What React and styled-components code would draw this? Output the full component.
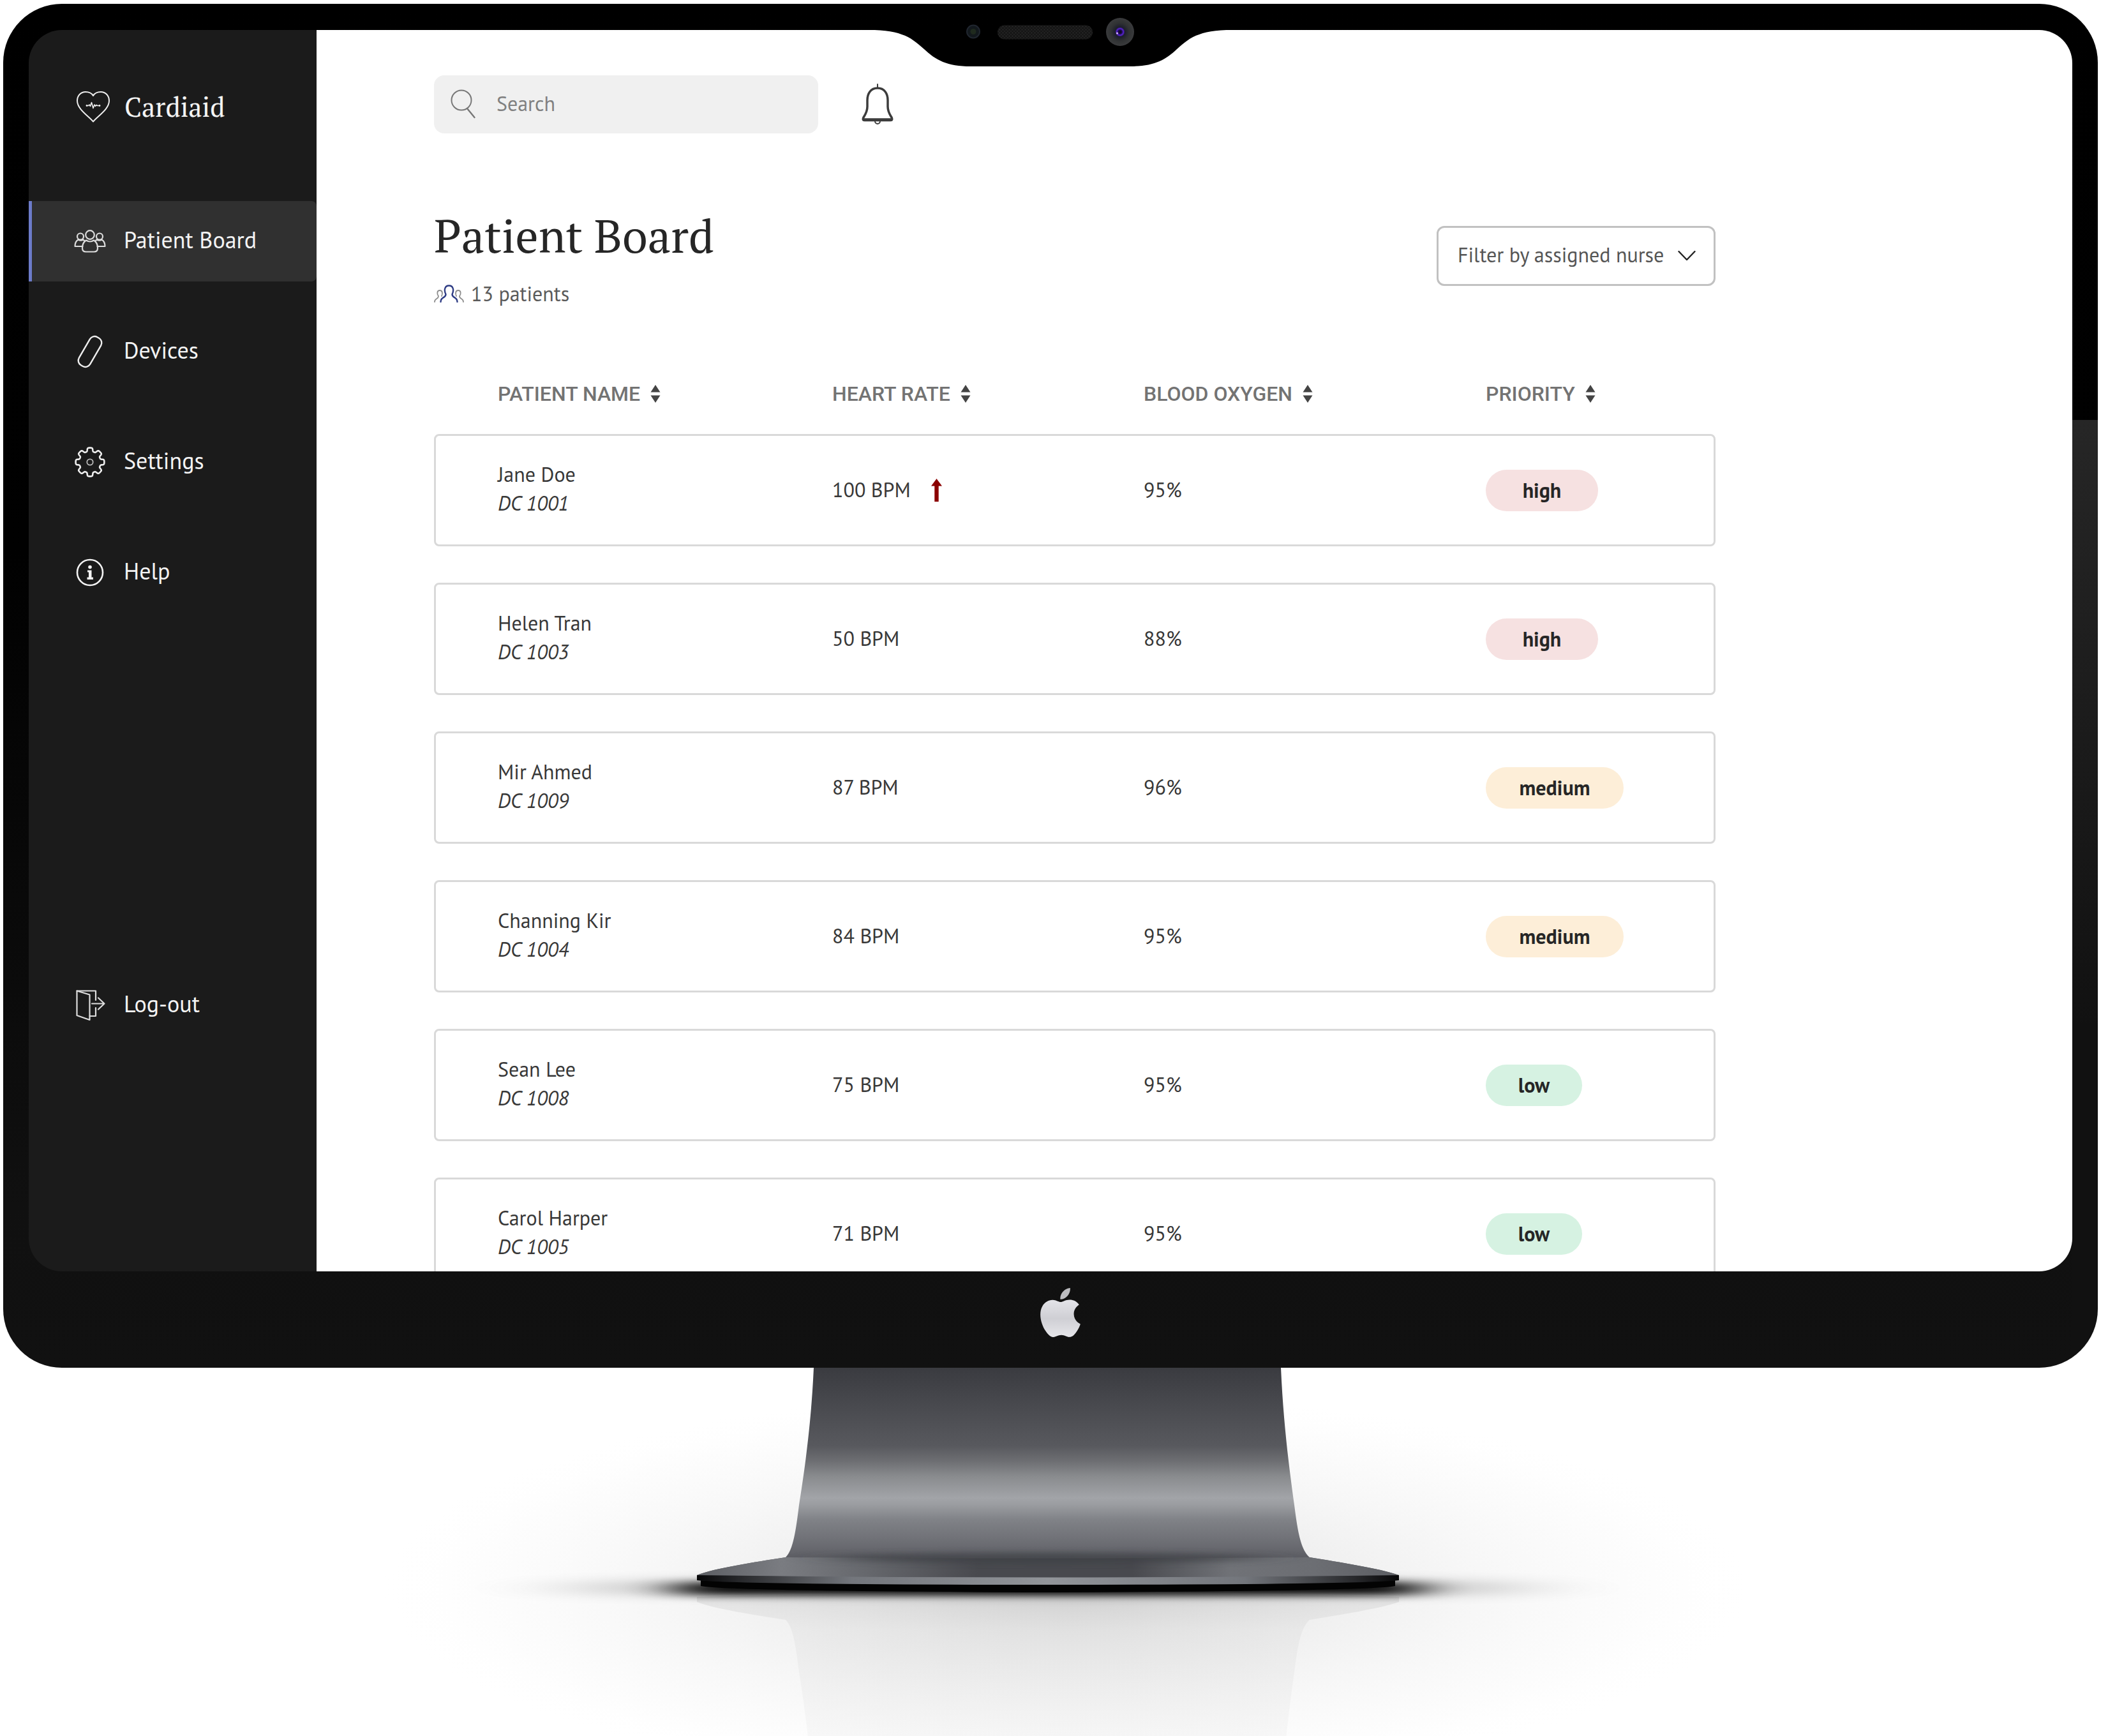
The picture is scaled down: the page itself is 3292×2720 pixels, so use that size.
import React from "react";
import styled, { createGlobalStyle } from "styled-components";

const sans = `"PT Sans", Lato, "Noto Sans", sans-serif`;
const serif = `"PT Serif", "Liberation Serif", serif`;

const GlobalStyle = createGlobalStyle`
  *, *::before, *::after { box-sizing: border-box; }
  body { margin: 0; background: #fff; font-family: ${sans}; overflow-x: hidden; }
  button, input, select { font-family: inherit; }
`;

/* ---------- device ---------- */

const Page = styled.div`
  display: flex;
  flex-direction: column;
  padding-top: 6px;
`;

const Monitor = styled.div`
  position: relative;
  z-index: 1;
  margin: 0 5px;
  padding: 41px 40px 0;
  border-radius: 92px;
  background:
    linear-gradient(to bottom, transparent 30.5%, #262626 30.5%, #111 75%) right top / 40px 100% no-repeat,
    linear-gradient(to bottom, #000 0%, #010101 40%, #101010 88%, #111 100%);
`;

const Screen = styled.div`
  display: flex;
  aspect-ratio: 3202 / 1945;
  overflow: hidden;
  border-radius: 52px;
  background: linear-gradient(to right, #1b1b1b 451px, #fff 451px);
`;

const Notch = styled.svg`
  position: absolute;
  top: 0;
  left: 50%;
  margin-left: -296px;
  width: 592px;
  height: 98px;
`;

const Chin = styled.div`
  display: flex;
  justify-content: center;
  align-items: flex-start;
  height: 151px;
  padding: 26px 0 0 30px;
`;

const Stand = styled.svg`
  display: block;
  width: 100%;
  height: auto;
`;

/* ---------- sidebar ---------- */

const Sidebar = styled.aside`
  display: flex;
  flex-direction: column;
  flex: 0 0 451px;
  color: #f4f4f4;
`;

const Brand = styled.div`
  display: flex;
  align-items: center;
  gap: 22px;
  height: 60px;
  margin: 90px 0 118px 74px;
  font: 42px/60px ${serif};
`;

const NavList = styled.nav`
  display: flex;
  flex-direction: column;
  gap: 47px;
`;

const NavLink = styled.a`
  display: flex;
  align-items: center;
  gap: 28px;
  height: 126px;
  padding-left: 66px;
  border-left: 5px solid ${(p) => (p.$active ? "#6c7bc9" : "transparent")};
  border-radius: 0 8px 8px 0;
  background: ${(p) => (p.$active ? "#303030" : "transparent")};
  color: inherit;
  font-size: 36px;
  line-height: 44px;
  text-decoration: none;

  svg { flex: none; }
`;

const NavLabel = styled.span`
  padding-bottom: 5px;
`;

const SidebarFoot = styled.div`
  margin-top: auto;
  padding-bottom: 354px;
`;

/* ---------- main ---------- */

const Main = styled.main`
  flex: 1;
  min-width: 0;
  padding: 71px 559px 0 184px;
`;

const TopBar = styled.header`
  display: flex;
  align-items: center;
  gap: 60px;
`;

const SearchBox = styled.label`
  display: flex;
  align-items: center;
  gap: 32px;
  flex: 0 0 602px;
  height: 91px;
  padding: 0 26px;
  border-radius: 16px;
  background: #f0f0f0;
`;

const SearchInput = styled.input`
  flex: 1;
  min-width: 0;
  padding: 0 0 4px;
  border: 0;
  outline: 0;
  background: transparent;
  color: #333;
  font-size: 32px;
  line-height: 40px;

  &::placeholder { color: #808080; opacity: 1; }
`;

const IconButton = styled.button`
  display: flex;
  padding: 0 0 2px;
  border: 0;
  background: none;
  cursor: pointer;
`;

const Heading = styled.section`
  display: flex;
  justify-content: space-between;
  align-items: flex-start;
  margin-top: 112px;
`;

const Title = styled.h1`
  margin: 0 0 23px;
  color: #262626;
  font: 400 72px/96px ${serif};
`;

const Count = styled.p`
  display: flex;
  align-items: center;
  gap: 11px;
  margin: 0;
  color: #5a5a5a;
  font-size: 32px;
  line-height: 40px;
`;

const Filter = styled.label`
  display: grid;
  align-items: center;
  width: 437px;
  margin-top: 33px;

  & > * { grid-area: 1 / 1; }
  svg { justify-self: end; margin-right: 31px; pointer-events: none; }
`;

const FilterSelect = styled.select`
  width: 100%;
  height: 94px;
  padding: 0 72px 4px 30px;
  appearance: none;
  border: 3px solid #c1c1c1;
  border-radius: 12px;
  background: #fff;
  color: #555;
  font-size: 32px;
`;

const Table = styled.table`
  display: flex;
  flex-direction: column;
  gap: 43px;
  margin-top: 117px;
`;

const TableHead = styled.thead`
  display: block;
`;

const TableBody = styled.tbody`
  display: flex;
  flex-direction: column;
  gap: 57px;
`;

const Row = styled.tr`
  display: grid;
  grid-template-columns: 524fr 488fr 536fr 357fr;
  align-items: center;
  padding: 0 3px 0 100px;
`;

const PatientRow = styled(Row)`
  height: 176px;
  padding: 0 0 0 97px;
  border: 3px solid #d9d9d9;
  border-radius: 8px;
`;

const HeadCell = styled.th`
  padding: 0;
  text-align: left;
`;

const SortButton = styled.button`
  display: flex;
  align-items: center;
  gap: 16px;
  padding: 0;
  border: 0;
  background: none;
  color: #737373;
  font: 500 32px/40px Roboto, sans-serif;
`;

const Cell = styled.td`
  padding: 0 0 1px;
  color: #383838;
  font-size: 32px;
  line-height: 45px;
`;

const NameCell = styled(Cell)`
  padding-bottom: 4px;
`;

const DeviceCode = styled.div`
  font-style: italic;
`;

const Reading = styled.div`
  display: flex;
  align-items: center;
  gap: 32px;
`;

const tones = {
  high: { bg: "#f6e1e1", width: 176 },
  medium: { bg: "#fdeed8", width: 216 },
  low: { bg: "#d6f2e2", width: 151 },
};

const Badge = styled.span`
  display: flex;
  align-items: center;
  justify-content: center;
  width: ${(p) => tones[p.$tone].width}px;
  height: 65px;
  margin-top: 2px;
  border-radius: 33px;
  background: ${(p) => tones[p.$tone].bg};
  color: #262626;
  font-weight: 700;
`;

/* ---------- icons ---------- */

const line = { fill: "none", strokeLinecap: "round", strokeLinejoin: "round" };

const HeartIcon = () => (
  <svg width="54" height="50" viewBox="0 0 54 50" stroke="#eee" strokeWidth="2" {...line}>
    <path d="M27 48.500C20 40 2 29 2 16 2 7.500 8 2 15 2 20.500 2 25 4.500 27 8 29 4.500 33.500 2 39 2 46 2 52 7.500 52 16 52 29 34 40 27 48.500Z" />
    <path strokeWidth="1.600" d="M17 23.500h2.500l1.500-1.500 1.500 2.500 2-6 2.500 9 2-5.500 1.500 2.500 1.500-2 1.500 1h3.500" />
    <circle cx="17" cy="23.500" r="1.400" fill="#eee" stroke="none" />
    <circle cx="37" cy="23.500" r="1.400" fill="#eee" stroke="none" />
  </svg>
);

const GroupIcon = () => (
  <svg width="50" height="36" viewBox="0 0 50 36" stroke="#ddd" strokeWidth="2.200" {...line}>
    <circle cx="25" cy="8" r="6.800" />
    <circle cx="10" cy="10.500" r="5" />
    <circle cx="40" cy="10.500" r="5" />
    <path d="M19 16.500c-4 2.500-6 7-6 12 0 3.500 2 6 5.500 6h13c3.500 0 5.500-2.500 5.500-6 0-5-2-9.500-6-12-3.500 2.500-8.500 2.500-12 0Z" />
    <path d="M13.500 26H1.500c0-4 1.500-8.500 5-10.500 2.500 1.500 5.500 1.500 8 0l2 2" />
    <path d="M36.500 26h12c0-4-1.500-8.500-5-10.500-2.500 1.500-5.500 1.500-8 0l-2 2" />
  </svg>
);

const DeviceIcon = () => (
  <svg width="50" height="52" viewBox="0 0 50 52" stroke="#eee" strokeWidth="2.400" {...line}>
    <rect x="15" y="0.500" width="20" height="51" rx="8.500" transform="rotate(30 25 26)" />
  </svg>
);

const gearPath = (() => {
  const points = [];
  for (let i = 0; i < 240; i += 1) {
    const a = (i / 240) * Math.PI * 2;
    const r = 19.6 + 2.8 * Math.tanh(2.6 * Math.cos(8 * a) + 0.5);
    points.push(`${(25 + r * Math.cos(a)).toFixed(2)} ${(25 + r * Math.sin(a)).toFixed(2)}`);
  }
  return `M${points.join("L")}Z`;
})();

const GearIcon = () => (
  <svg width="50" height="50" viewBox="0 0 50 50" stroke="#eee" strokeWidth="2.600" {...line}>
    <path d={gearPath} />
    <circle cx="25" cy="25" r="4.700" strokeWidth="1.800" stroke="#bbb" />
  </svg>
);

const InfoIcon = () => (
  <svg width="50" height="50" viewBox="0 0 50 50" fill="#f4f4f4">
    <circle cx="25" cy="25" r="20" fill="none" stroke="#f4f4f4" strokeWidth="2.600" />
    <circle cx="25" cy="16.500" r="2.800" />
    <path d="M21 21.500h6.500v11H30V36H20.500v-3.500H23v-8h-2Z" />
  </svg>
);

const ExitIcon = () => (
  <svg width="50" height="50" viewBox="0 0 50 50" stroke="#ddd" strokeWidth="2.200" {...line}>
    <path d="M4.500 2.500l20 6V48l-20-7Z" />
    <path d="M4.500 2.500h29.500V17M34 29v13h-9.500" />
    <path d="M28 22.500h19M38 13.500l9.500 9-9.500 9" />
  </svg>
);

const SearchIcon = () => (
  <svg width="40" height="48" viewBox="0 0 40 48" stroke="#777" strokeWidth="2" {...line}>
    <circle cx="17" cy="17" r="15.500" />
    <path strokeWidth="2.400" d="M26 30l11.500 14" />
  </svg>
);

const BellIcon = () => (
  <svg width="64" height="66" viewBox="0 0 64 66" stroke="#3c3c3c" strokeWidth="3.500" {...line}>
    <path strokeWidth="2" d="M33 2v5" />
    <path d="M33 8C22 8 17 17 17 27v10c0 8-3 12-6 17-1.500 2.500-1 4.500 1.500 4.500h41c2.500 0 3-2 1.500-4.500-3-5-6-9-6-17V27C49 17 44 8 33 8Z" />
    <path d="M11 57h44" />
    <path strokeWidth="2" d="M29 59.500c0 6 8 6 8 0" />
  </svg>
);

const PeopleIcon = () => (
  <svg width="47" height="28" viewBox="0 0 47 28" {...line}>
    <g stroke="#8c8c8c" strokeWidth="1.800">
      <path d="M1 27c0-6 6-4 6-9-3-4-2-9 2-9s5 4 3 9" />
      <path d="M46 27c0-6-6-4-6-9 3-4 2-9-2-9s-5 4-3 9" />
    </g>
    <path stroke="#2f3d85" strokeWidth="2.400" d="M10.500 27c0-9 8-5 8-12-3-6-2-13.500 5-13.500s8 7.500 5 13.500c0 7 8 3 8 12" />
  </svg>
);

const ChevronIcon = () => (
  <svg width="28" height="18" viewBox="0 0 28 18" stroke="#222" strokeWidth="2.400" {...line}>
    <path d="M1.500 2l12.500 13L26.500 2" />
  </svg>
);

const SortIcon = () => (
  <svg width="16" height="28" viewBox="0 0 16 28" fill="#444">
    <path d="M8 0l7.500 11.500H.5ZM8 28L.5 16.500h15Z" />
  </svg>
);

const UpIcon = () => (
  <svg width="17" height="36" viewBox="0 0 17 36" fill="#8b0000">
    <path d="M8.500 0L17 11.500h-5.300V36H5.300V11.500H0Z" />
  </svg>
);

const AppleLogo = () => (
  <svg width="77" height="77" viewBox="0 0 24 24" aria-label="Apple">
    <defs>
      <linearGradient id="apple" x1="0" y1="0" x2="0" y2="1">
        <stop offset="0" stopColor="#e3e3e8" />
        <stop offset="0.500" stopColor="#cfcfd4" />
        <stop offset="1" stopColor="#e6e6ea" />
      </linearGradient>
    </defs>
    <path fill="url(#apple)" d="M12.152 6.896c-.948 0-2.415-1.078-3.960-1.040-2.040.027-3.910 1.183-4.961 3.014-2.117 3.675-.546 9.103 1.519 12.090 1.013 1.454 2.208 3.090 3.792 3.039 1.520-.065 2.090-.987 3.935-.987 1.831 0 2.350.987 3.960.948 1.637-.026 2.676-1.480 3.676-2.948 1.156-1.688 1.636-3.325 1.662-3.415-.039-.013-3.182-1.221-3.220-4.857-.026-3.040 2.480-4.494 2.597-4.559-1.429-2.090-3.623-2.324-4.390-2.376-2-.156-3.675 1.090-4.610 1.090z" />
    <path fill="#bcbcc0" d="M15.530 3.830c.843-1.012 1.400-2.427 1.245-3.830-1.207.052-2.662.805-3.532 1.818-.780.896-1.454 2.338-1.273 3.714 1.338.104 2.715-.688 3.559-1.701" />
  </svg>
);

const CameraNotch = () => (
  <Notch viewBox="1350 6 592 98" aria-hidden="true">
    <defs>
      <radialGradient id="lens">
        <stop offset="0" stopColor="#0b0612" />
        <stop offset="0.140" stopColor="#1c0a50" />
        <stop offset="0.240" stopColor="#5a22d8" />
        <stop offset="0.340" stopColor="#1c1d2c" />
        <stop offset="0.650" stopColor="#303233" />
        <stop offset="1" stopColor="#3a3b3d" />
      </radialGradient>
      <pattern id="mesh" x="0" y="0" width="5" height="5" patternUnits="userSpaceOnUse">
        <rect width="5" height="5" fill="#161616" />
        <circle cx="1.500" cy="1.500" r="1" fill="#2c2c2c" />
        <circle cx="4" cy="4" r="1" fill="#262626" />
      </pattern>
    </defs>
    <path d="M1350 46.500C1410 46.500 1425 56 1448 77 1466 94 1484 104 1521 104H1771C1808 104 1826 94 1844 77 1867 56 1882 46.500 1942 46.500V40H1350Z" fill="#000" />
    <circle cx="1525" cy="49.500" r="10" fill="#12181c" stroke="#20262f" strokeWidth="2" />
    <circle cx="1525" cy="49.500" r="4.500" fill="#1f2a1e" />
    <rect x="1563" y="39.500" width="149" height="22" rx="11" fill="url(#mesh)" />
    <circle cx="1755" cy="50" r="22" fill="url(#lens)" />
    <circle cx="1750.500" cy="52" r="1.500" fill="#d9b8ff" />
  </Notch>
);

const neck =
  "M1275 0H2007C2011 90 2021 165 2028 215 2033 255 2038 285 2052 297 2100 305 2160 314 2192 325V333Q1642 344 1092 333V325C1120 314 1180 305 1231 297 1243 285 1247 255 1252 215 1260 165 1271 90 1275 0Z";

const foot =
  "M1231 297Q1642 300 2052 297C2100 305 2160 314 2192 325Q1642 334 1092 325C1120 314 1180 305 1231 297Z";

const MonitorStand = () => (
  <Stand viewBox="0 0 3292 577" aria-hidden="true">
    <defs>
      <linearGradient id="metal" gradientUnits="userSpaceOnUse" x1="0" y1="0" x2="0" y2="340">
        <stop offset="0" stopColor="#3a3b40" />
        <stop offset="0.180" stopColor="#494a4f" />
        <stop offset="0.360" stopColor="#58595e" />
        <stop offset="0.430" stopColor="#6d6e72" />
        <stop offset="0.500" stopColor="#898b8e" />
        <stop offset="0.600" stopColor="#a2a4a8" />
        <stop offset="0.630" stopColor="#9b9da1" />
        <stop offset="0.700" stopColor="#808287" />
        <stop offset="0.820" stopColor="#6a6b71" />
        <stop offset="0.870" stopColor="#5e5f65" />
        <stop offset="1" stopColor="#5a5b60" />
      </linearGradient>
      <linearGradient id="foot" x1="0" y1="0" x2="1" y2="0">
        <stop offset="0" stopColor="#5c5e63" />
        <stop offset="0.120" stopColor="#7a7c81" />
        <stop offset="0.240" stopColor="#66686d" />
        <stop offset="0.400" stopColor="#48494e" />
        <stop offset="0.620" stopColor="#48494e" />
        <stop offset="0.760" stopColor="#707277" />
        <stop offset="0.880" stopColor="#6c6e73" />
        <stop offset="1" stopColor="#5c5e63" />
      </linearGradient>
      <linearGradient id="lip" x1="0" y1="0" x2="1" y2="0">
        <stop offset="0" stopColor="#060607" />
        <stop offset="0.060" stopColor="#26272a" />
        <stop offset="0.220" stopColor="#73767c" />
        <stop offset="0.500" stopColor="#92959a" />
        <stop offset="0.780" stopColor="#73767c" />
        <stop offset="0.940" stopColor="#26272a" />
        <stop offset="1" stopColor="#060607" />
      </linearGradient>
      <radialGradient id="ambient">
        <stop offset="0" stopColor="#777" stopOpacity="0.250" />
        <stop offset="0.300" stopColor="#888" stopOpacity="0.160" />
        <stop offset="0.600" stopColor="#999" stopOpacity="0.080" />
        <stop offset="0.850" stopColor="#aaa" stopOpacity="0.025" />
        <stop offset="1" stopColor="#fff" stopOpacity="0" />
      </radialGradient>
      <linearGradient id="mirror" gradientUnits="userSpaceOnUse" x1="0" y1="100" x2="0" y2="333">
        <stop offset="0" stopColor="#999" stopOpacity="0.050" />
        <stop offset="0.780" stopColor="#999" stopOpacity="0.090" />
        <stop offset="1" stopColor="#888" stopOpacity="0.160" />
      </linearGradient>
      <filter id="soft" x="-20%" y="-200%" width="140%" height="500%">
        <feGaussianBlur stdDeviation="40 6" />
      </filter>
      <filter id="wide" x="-30%" y="-200%" width="160%" height="500%">
        <feGaussianBlur stdDeviation="90 10" />
      </filter>
      <filter id="feather" x="-20%" y="-100%" width="140%" height="300%">
        <feGaussianBlur stdDeviation="40 5" />
      </filter>
      <clipPath id="body">
        <path d={neck} />
      </clipPath>
    </defs>
    <ellipse cx="1670" cy="345" rx="1080" ry="310" fill="url(#ambient)" />
    <g transform="translate(0 692) scale(1 -1)">
      <path d={neck} fill="url(#mirror)" />
    </g>
    <ellipse cx="1642" cy="345" rx="760" ry="9" fill="#000" opacity="0.400" filter="url(#wide)" />
    <rect x="1060" y="336" width="1164" height="20" rx="10" fill="#000" opacity="0.950" filter="url(#soft)" />
    <path d="M1098 328H2186V342Q2150 350 1642 352 1134 350 1098 342Z" fill="#030303" />
    <path d={neck} fill="url(#metal)" />
    <path d={foot} fill="url(#foot)" />
    <g clipPath="url(#body)">
      <ellipse cx="1642" cy="298" rx="340" ry="8" fill="#3e3f44" opacity="0.700" filter="url(#feather)" />
    </g>
    <path d="M1092 325Q1642 332 2192 325V333Q2120 340 1642 340 1164 340 1092 333Z" fill="url(#lip)" />
  </Stand>
);

/* ---------- data ---------- */

const navItems = [
  { label: "Patient Board", Icon: GroupIcon, active: true },
  { label: "Devices", Icon: DeviceIcon },
  { label: "Settings", Icon: GearIcon },
  { label: "Help", Icon: InfoIcon },
];

const columns = ["PATIENT NAME", "HEART RATE", "BLOOD OXYGEN", "PRIORITY"];

const patients = [
  { name: "Jane Doe", code: "DC 1001", rate: 100, oxygen: 95, priority: "high", rising: true },
  { name: "Helen Tran", code: "DC 1003", rate: 50, oxygen: 88, priority: "high" },
  { name: "Mir Ahmed", code: "DC 1009", rate: 87, oxygen: 96, priority: "medium" },
  { name: "Channing Kir", code: "DC 1004", rate: 84, oxygen: 95, priority: "medium" },
  { name: "Sean Lee", code: "DC 1008", rate: 75, oxygen: 95, priority: "low" },
  { name: "Carol Harper", code: "DC 1005", rate: 71, oxygen: 95, priority: "low" },
];

export default function App() {
  return (
    <Page>
      <GlobalStyle />
      <Monitor>
        <Screen>
          <Sidebar>
            <Brand>
              <HeartIcon />
              Cardiaid
            </Brand>
            <NavList>
              {navItems.map(({ label, Icon, active }) => (
                <NavLink key={label} href="#" $active={active}>
                  <Icon />
                  <NavLabel>{label}</NavLabel>
                </NavLink>
              ))}
            </NavList>
            <SidebarFoot>
              <NavLink href="#">
                <ExitIcon />
                <NavLabel>Log-out</NavLabel>
              </NavLink>
            </SidebarFoot>
          </Sidebar>
          <Main>
            <TopBar>
              <SearchBox>
                <SearchIcon />
                <SearchInput type="search" placeholder="Search" aria-label="Search" />
              </SearchBox>
              <IconButton type="button" aria-label="Notifications">
                <BellIcon />
              </IconButton>
            </TopBar>
            <Heading>
              <div>
                <Title>Patient Board</Title>
                <Count>
                  <PeopleIcon />
                  13 patients
                </Count>
              </div>
              <Filter>
                <FilterSelect aria-label="Filter by assigned nurse">
                  <option>Filter by assigned nurse</option>
                </FilterSelect>
                <ChevronIcon />
              </Filter>
            </Heading>
            <Table>
              <TableHead>
                <Row>
                  {columns.map((column) => (
                    <HeadCell key={column} scope="col">
                      <SortButton type="button">
                        {column}
                        <SortIcon />
                      </SortButton>
                    </HeadCell>
                  ))}
                </Row>
              </TableHead>
              <TableBody>
                {patients.map((p) => (
                  <PatientRow key={p.code}>
                    <NameCell>
                      <div>{p.name}</div>
                      <DeviceCode>{p.code}</DeviceCode>
                    </NameCell>
                    <Cell>
                      <Reading>
                        {p.rate} BPM
                        {p.rising && <UpIcon />}
                      </Reading>
                    </Cell>
                    <Cell>{p.oxygen}%</Cell>
                    <Cell>
                      <Badge $tone={p.priority}>{p.priority}</Badge>
                    </Cell>
                  </PatientRow>
                ))}
              </TableBody>
            </Table>
          </Main>
        </Screen>
        <Chin>
          <AppleLogo />
        </Chin>
        <CameraNotch />
      </Monitor>
      <MonitorStand />
    </Page>
  );
}
